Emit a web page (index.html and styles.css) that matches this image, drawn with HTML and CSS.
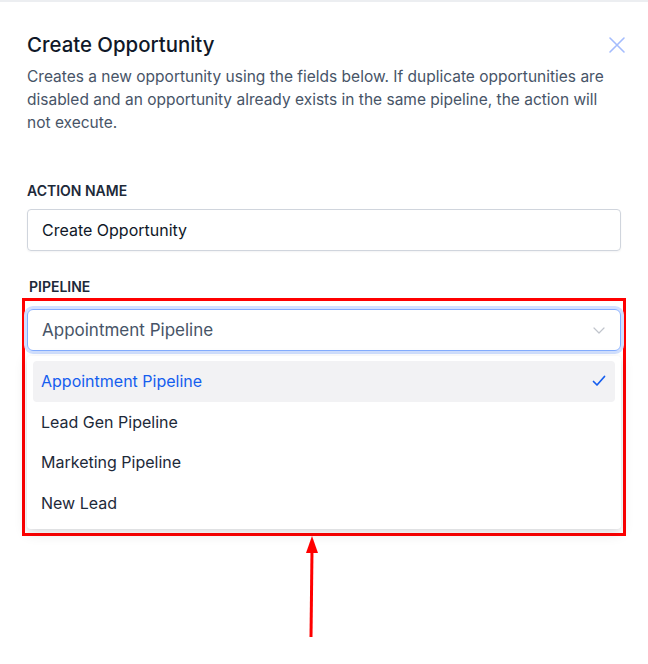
FILE: index.html
```html
<!DOCTYPE html>
<html>
<head>
    <title>Create Opportunity</title>
    <link rel="stylesheet" href="styles.css">
</head>
<body>
    <div class="modal">
        <div class="modal-header">
            <h1 class="modal-title">Create Opportunity</h1>
            <button class="close-btn" aria-label="Close">
                <svg width="18" height="18" viewBox="0 0 18 18" fill="none">
                    <path d="M2 2L16 16M16 2L2 16" stroke="#a4bcfd" stroke-width="1.6" stroke-linecap="round"/>
                </svg>
            </button>
        </div>
        <p class="modal-desc">Creates a new opportunity using the fields below. If duplicate opportunities are disabled and an opportunity already exists in the same pipeline, the action will not execute.</p>

        <div class="field">
            <label class="field-label">ACTION NAME</label>
            <div class="input">Create Opportunity</div>
        </div>

        <div class="field">
            <label class="field-label pipeline-label">PIPELINE</label>
            <div class="highlight">
                <div class="select">
                    <span>Appointment Pipeline</span>
                    <svg width="14" height="14" viewBox="0 0 14 14" fill="none">
                        <path d="M2 5L7 10L12 5" stroke="#c0c4cc" stroke-width="1.2" stroke-linecap="round" stroke-linejoin="round"/>
                    </svg>
                </div>
                <ul class="menu">
                    <li class="option selected">
                        <span>Appointment Pipeline</span>
                        <svg width="16" height="16" viewBox="0 0 16 16" fill="none">
                            <path d="M2.5 8.5L6 12L13.5 3.5" stroke="#155eef" stroke-width="1.7" stroke-linecap="round" stroke-linejoin="round"/>
                        </svg>
                    </li>
                    <li class="option">Lead Gen Pipeline</li>
                    <li class="option">Marketing Pipeline</li>
                    <li class="option">New Lead</li>
                </ul>
            </div>
            <svg class="arrow" width="24" height="102" viewBox="0 0 24 102">
                <path d="M12 14L11 101" stroke="#ff0000" stroke-width="3"/>
                <path d="M12 0L6 17H18Z" fill="#ff0000"/>
            </svg>
        </div>
    </div>
</body>
</html>
```

FILE: styles.css
```css
body {
    margin: 0;
    font-family: Inter, 'Noto Sans', sans-serif;
    background-color: #ffffff;
    color: #101828;
    border-top: 2px solid #eceef1;
}

.modal {
    padding: 29px 27px 0;
}

.modal-header {
    display: flex;
    justify-content: space-between;
    align-items: center;
}

.modal-title {
    margin: 0;
    font-size: 20.4px;
    font-weight: 500;
    line-height: 28px;
    color: #101828;
}

.close-btn {
    border: none;
    background: none;
    padding: 0;
    margin-right: -5px;
    display: flex;
    cursor: pointer;
}

.modal-desc {
    margin: 6px 0 0;
    font-size: 15.5px;
    line-height: 23px;
    color: #475467;
}

.field {
    margin-top: 47px;
}

.field + .field {
    margin-top: 26px;
}

.field-label {
    display: block;
    font-size: 14px;
    font-weight: 600;
    line-height: 20px;
    color: #1d2939;
    margin-bottom: 8px;
}

.pipeline-label {
    margin-left: 2px;
    margin-bottom: 1px;
}

.input {
    border: 1px solid #d0d5dd;
    border-radius: 4px;
    height: 40px;
    padding: 0 14px;
    display: flex;
    align-items: center;
    font-size: 16px;
    color: #101828;
    box-shadow: 0 1px 2px rgba(16, 24, 40, 0.05);
}

.highlight {
    border: 3px solid #ff0000;
    margin: 0 -5px;
    padding: 8px 2px 4px;
}

.select {
    border: 1px solid #84adff;
    border-radius: 6px;
    height: 40px;
    padding: 0 14px;
    display: flex;
    align-items: center;
    justify-content: space-between;
    font-size: 17px;
    color: #475467;
    box-shadow: 0 0 0 3px #d1e0ff;
}

.menu {
    list-style: none;
    margin: 5px 0 0;
    padding: 5px 6px 6px;
    background: #ffffff;
    border-radius: 4px;
    box-shadow: 0 4px 14px rgba(16, 24, 40, 0.12), 0 2px 4px rgba(16, 24, 40, 0.06);
}

.option {
    height: 40.5px;
    padding: 0 8px;
    display: flex;
    align-items: center;
    justify-content: space-between;
    font-size: 16px;
    color: #1d2939;
    border-radius: 4px;
}

.option.selected {
    background-color: #f2f2f4;
    color: #155eef;
}

.arrow {
    display: block;
    margin: 0 0 0 273px;
}
```
